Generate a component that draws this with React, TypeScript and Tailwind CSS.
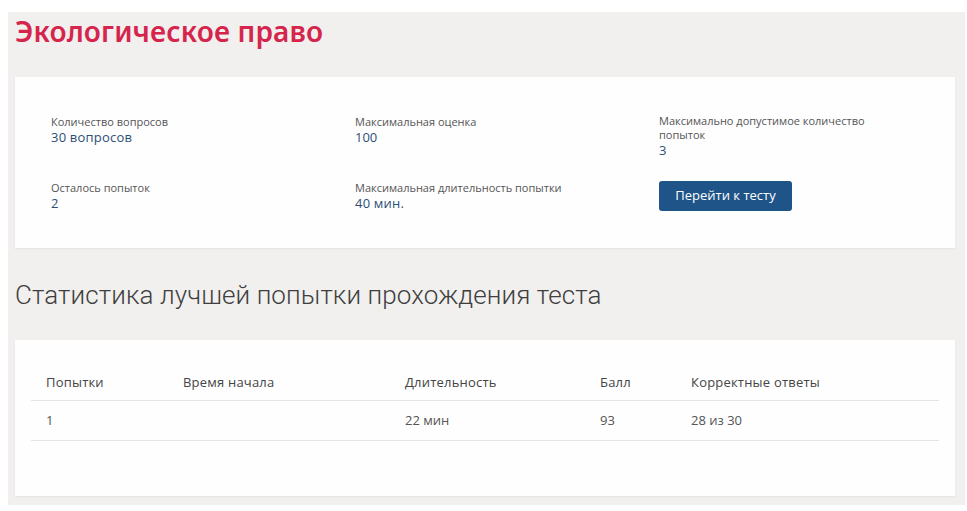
export default function App() {
	const info = [
		{ label: "Количество вопросов", value: "30 вопросов", bold: true },
		{ label: "Максимальная оценка", value: "100" },
		{ label: "Максимально допустимое количество попыток", value: "3" },
		{ label: "Осталось попыток", value: "2" },
		{ label: "Максимальная длительность попытки", value: "40 мин.", bold: true },
	];

	return (
		<div className="min-h-[511px] bg-white pt-[12px] pl-[8px] pr-[2px]" style={{ fontFamily: '"Open Sans", "Noto Sans", sans-serif' }}>
			<div className="bg-[#f1f0ee] h-[493px] px-[7px] pt-[0px]">
				{/* Title */}
				<h1 className="text-[28px] leading-[38px] font-semibold text-[#d6254c] tracking-[0.15px]" style={{ fontFamily: '"Noto Sans", sans-serif' }}>
					Экологическое право
				</h1>

				{/* Info card */}
				<div className="mt-[27px] bg-[#fefefe] h-[171px] w-[940px] shadow-[0_1px_2px_rgba(0,0,0,0.06)] pl-[36px] pt-[37px]">
					<div className="grid grid-cols-[304px_304px_240px] gap-y-[21px]">
						{info.map((item, i) => (
							<div key={i} className={i === 2 ? "" : "pt-[1px]"}>
								<div className="text-[11px] leading-[14px] text-[#555] max-w-[230px]">{item.label}</div>
								<div className={`text-[13px] leading-[17px] ${item.bold ? "font-medium tracking-[0.2px]" : ""} text-[#2d4f78]`}>{item.value}</div>
							</div>
						))}
						<div className="pt-[1px]">
							<button className="h-[30px] w-[133px] rounded-[3px] bg-[#1e5487] text-white text-[13px]">
								Перейти к тесту
							</button>
						</div>
					</div>
				</div>

				{/* Stats heading */}
				<h2 className="mt-[31px] text-[26px] leading-[32px] font-light text-[#3f3f3f] tracking-[0.1px]" style={{ fontFamily: '"Roboto", sans-serif' }}>
					Статистика лучшей попытки прохождения теста
				</h2>

				{/* Stats card */}
				<div className="mt-[29px] bg-[#fefefe] h-[156px] w-[940px] shadow-[0_1px_2px_rgba(0,0,0,0.06)] px-[16px] pt-[26px]">
					<div className="grid grid-cols-[137px_222px_195px_91px_1fr] h-[35px] items-center border-b border-[#e4e4e4] text-[13px] text-[#444] pl-[15px] tracking-[0.2px]">
						<div>Попытки</div>
						<div>Время начала</div>
						<div>Длительность</div>
						<div>Балл</div>
						<div>Корректные ответы</div>
					</div>
					<div className="grid grid-cols-[137px_222px_195px_91px_1fr] h-[40px] items-center border-b border-[#e4e4e4] text-[13px] text-[#555] pl-[15px]">
						<div>1</div>
						<div></div>
						<div>22 мин</div>
						<div>93</div>
						<div>28 из 30</div>
					</div>
				</div>
			</div>
		</div>
	);
}
